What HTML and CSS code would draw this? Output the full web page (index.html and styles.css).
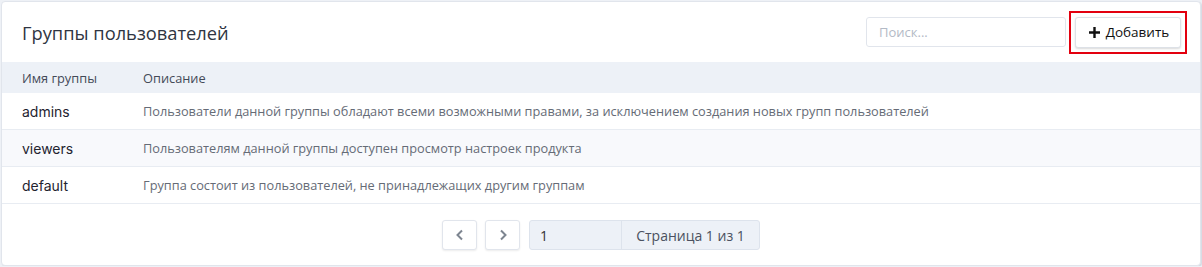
FILE: index.html
```html
<!DOCTYPE html>
<html lang="ru">
<head>
    <meta charset="UTF-8">
    <title>Группы пользователей</title>
    <link rel="stylesheet" href="styles.css">
</head>
<body>
    <div class="card">
        <!-- Шапка -->
        <div class="card-header">
            <h1>Группы пользователей</h1>
            <div class="tools">
                <input class="search" type="text" placeholder="Поиск...">
                <div class="highlight">
                    <button class="add-btn">
                        <svg width="11" height="11" viewBox="0 0 11 11"><path d="M5.5 0v11M0 5.5h11" stroke="#111" stroke-width="2.4"/></svg>
                        Добавить
                    </button>
                </div>
            </div>
        </div>

        <!-- Таблица -->
        <div class="groups">
            <div class="row head">
                <div class="col-name">Имя группы</div>
                <div>Описание</div>
            </div>
            <div class="row">
                <div class="col-name name">admins</div>
                <div class="desc">Пользователи данной группы обладают всеми возможными правами, за исключением создания новых групп пользователей</div>
            </div>
            <div class="row striped">
                <div class="col-name name">viewers</div>
                <div class="desc">Пользователям данной группы доступен просмотр настроек продукта</div>
            </div>
            <div class="row">
                <div class="col-name name">default</div>
                <div class="desc">Группа состоит из пользователей, не принадлежащих другим группам</div>
            </div>
        </div>

        <!-- Пагинация -->
        <div class="pager">
            <button class="page-btn"><svg width="10" height="12" viewBox="0 0 10 12"><path d="M7 1.5L2.5 6L7 10.5" fill="none" stroke="#7d8590" stroke-width="2"/></svg></button>
            <button class="page-btn"><svg width="10" height="12" viewBox="0 0 10 12"><path d="M3 1.5L7.5 6L3 10.5" fill="none" stroke="#7d8590" stroke-width="2"/></svg></button>
            <div class="page-group">
                <input class="page-input" type="text" value="1">
                <span class="page-label">Страница 1 из 1</span>
            </div>
        </div>
    </div>
</body>
</html>
```

FILE: styles.css
```css
body {
    margin: 0;
    padding: 1px 0 0 1px;
    background-color: #eef1f6;
    font-family: 'Open Sans', 'Noto Sans', sans-serif;
}

.card {
    width: 1198px;
    height: 263px;
    background-color: white;
    border: 1px solid #e1e5ec;
    border-radius: 4px;
    box-shadow: 1px 1px 1px #d5dae3;
    overflow: hidden;
}

.card-header {
    display: flex;
    align-items: center;
    justify-content: space-between;
    height: 60px;
    padding: 0 13px 0 20px;
}

h1 {
    margin: 0;
    font-size: 18.3px;
    font-weight: 500;
    color: #2f3542;
}

.tools {
    display: flex;
    align-items: center;
    gap: 3px;
}

.search {
    box-sizing: border-box;
    width: 200px;
    height: 30px;
    padding: 0 12px;
    border: 1px solid #e1e5ec;
    border-radius: 3px;
    font-family: inherit;
    font-size: 13px;
    color: #333;
}

.search::placeholder {
    color: #b3bac6;
}

/* красная рамка вокруг кнопки */
.highlight {
    padding: 4px;
    border: 2px solid #e3000f;
}

.add-btn {
    display: flex;
    align-items: center;
    justify-content: center;
    gap: 6px;
    box-sizing: border-box;
    width: 106px;
    height: 31px;
    padding: 0 0 0 2px;
    background-color: white;
    border: 1px solid #dde1e7;
    border-radius: 3px;
    box-shadow: 0 1px 2px rgba(0, 0, 0, 0.15);
    font-family: inherit;
    font-size: 13.5px;
    font-weight: 500;
    color: #111;
    cursor: pointer;
}

.row {
    display: flex;
    align-items: center;
    height: 36px;
    padding-left: 20px;
    border-bottom: 1px solid #e8ecf2;
}

.row.head {
    height: 31px;
    border-bottom: none;
    background-color: #edf1f7;
    font-size: 12.8px;
    font-weight: 500;
    color: #444a57;
}

.row.striped {
    background-color: #f8f9fc;
}

.col-name {
    width: 121px;
    flex-shrink: 0;
}

.name {
    font-family: 'Inter', sans-serif;
    font-size: 14px;
    font-weight: 400;
    color: #1f2430;
}

.desc {
    font-size: 12.75px;
    color: #656b76;
}

.pager {
    display: flex;
    justify-content: center;
    align-items: center;
    gap: 8px;
    margin-top: 16px;
}

.page-btn {
    display: flex;
    align-items: center;
    justify-content: center;
    width: 35px;
    height: 30px;
    padding: 0;
    background-color: white;
    border: 1px solid #e1e5ec;
    border-radius: 3px;
    box-shadow: 0 1px 2px rgba(0, 0, 0, 0.08);
    cursor: pointer;
}

.page-group {
    display: flex;
    height: 28px;
    margin-left: 1px;
    background-color: #edf1f7;
    border: 1px solid #dde3ec;
    border-radius: 3px;
}

.page-input {
    box-sizing: border-box;
    width: 92px;
    height: 28px;
    padding: 0 10px;
    background: transparent;
    border: none;
    border-right: 1px solid #dde3ec;
    font-family: inherit;
    font-size: 14px;
    color: #333;
}

.page-label {
    display: flex;
    align-items: center;
    justify-content: center;
    width: 137px;
    font-size: 14px;
    color: #4b5160;
}
```
